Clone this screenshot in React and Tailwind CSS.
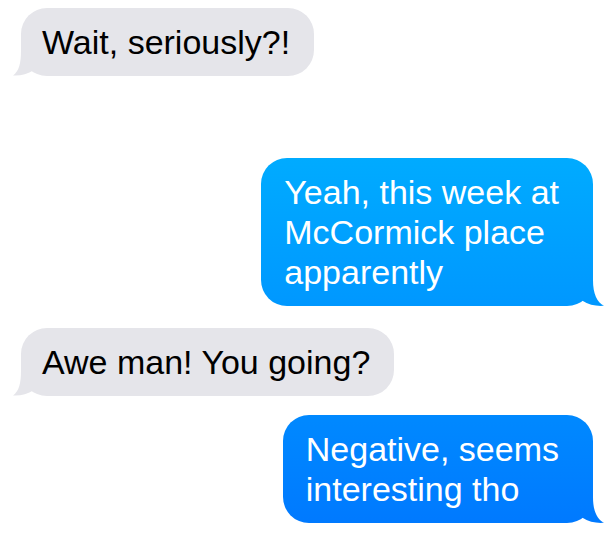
const blue = 'bg-linear-to-b from-[#00bfff] to-[#0078ff] bg-fixed';

function Received({ lines }) {
  return (
    <div className="relative self-start rounded-[26px] bg-[#e5e5ea] pt-[14px] pb-[14px] pl-[21px] pr-[24px] text-black">
      <div className="absolute bottom-0 left-[-9px] h-[26px] w-[30px] bg-[#e5e5ea] [clip-path:path('M22_0L9_0C9_14_7_21_1_25.5C8_26_15_24.5_22_20Z')]" />
      <p className="relative whitespace-nowrap">
        {lines.map((l, i) => (
          <span key={i} className="block">{l}</span>
        ))}
      </p>
    </div>
  );
}

function Sent({ lines }) {
  return (
    <div className={`relative self-end rounded-[26px] pt-[14px] pb-[14px] pl-[23px] pr-[34px] text-white ${blue}`}>
      <div className={`absolute bottom-0 right-[-12px] h-[26px] w-[32px] ${blue} [clip-path:path('M8_0L20_0C20_14_24_22_31_25.8C23_26.3_16_25_9_20.5Z')]`} />
      <p className="relative whitespace-nowrap">
        {lines.map((l, i) => (
          <span key={i} className="block">{l}</span>
        ))}
      </p>
    </div>
  );
}

export default function App() {
  return (
    <div className="flex h-[533px] w-[614px] flex-col overflow-hidden bg-white pt-[8px] pl-[21px] pr-[21px] font-['Liberation_Sans',Arial,sans-serif] text-[34px] leading-[40px]">
      <Received lines={['Wait, seriously?!']} />
      <div className="mt-[82px] flex flex-col">
        <Sent lines={['Yeah, this week at', 'McCormick place', 'apparently']} />
      </div>
      <div className="mt-[22px] flex flex-col">
        <Received lines={['Awe man! You going?']} />
      </div>
      <div className="mt-[19px] flex flex-col">
        <Sent lines={['Negative, seems', 'interesting tho']} />
      </div>
    </div>
  );
}
